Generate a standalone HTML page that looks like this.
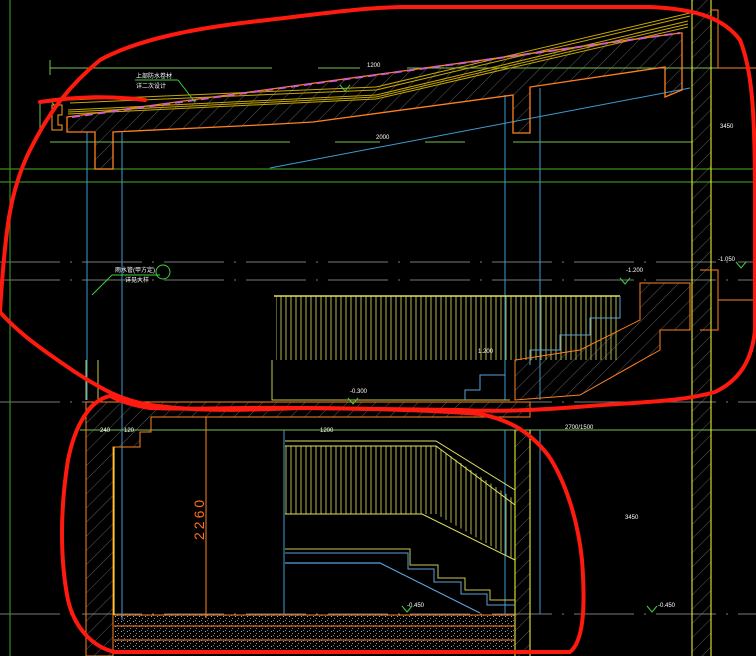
<!DOCTYPE html>
<html><head><meta charset="utf-8"><style>
html,body{margin:0;padding:0;background:#000;}
svg{display:block}
text{font-family:"Liberation Sans","Noto Sans CJK SC",sans-serif;fill:#fff;font-size:6px}
</style></head><body>
<svg width="756" height="656" viewBox="0 0 756 656" xmlns="http://www.w3.org/2000/svg">
<defs>
<pattern id="h" width="10" height="10" patternUnits="userSpaceOnUse" patternTransform="rotate(45)">
<line x1="0" y1="0" x2="0" y2="10" stroke="#999" stroke-width="0.6"/></pattern>
<pattern id="rail" width="5" height="10" patternUnits="userSpaceOnUse">
<line x1="1" y1="0" x2="1" y2="10" stroke="#e0e060" stroke-width="0.8"/></pattern>
<pattern id="spk" width="6" height="5" patternUnits="userSpaceOnUse">
<rect x="1" y="1" width="1" height="1" fill="#aaa"/><rect x="4" y="3" width="1" height="1" fill="#888"/><rect x="3" y="0" width="1" height="1" fill="#777"/></pattern>
</defs>
<rect width="756" height="656" fill="#000"/>
<g stroke="#3a8a20" stroke-width="1.2" fill="none">
<line x1="10" y1="0" x2="10" y2="656"/>
<line x1="0" y1="169" x2="756" y2="169"/>
<line x1="0" y1="182" x2="756" y2="182"/>
</g>
<g stroke="#7ac050" stroke-width="1" fill="none">
<line x1="50" y1="68" x2="272" y2="68"/><line x1="318" y1="68" x2="360" y2="68"/><line x1="407" y1="68" x2="756" y2="68"/>
<line x1="50" y1="142" x2="290" y2="142"/><line x1="335" y1="142" x2="380" y2="142"/><line x1="425" y1="142" x2="465" y2="142"/><line x1="513" y1="142" x2="692" y2="142"/>
<line x1="80" y1="430" x2="756" y2="430"/>
<line x1="50" y1="60" x2="50" y2="75"/><line x1="40" y1="100" x2="40" y2="135"/>
</g>
<g stroke="#777" stroke-width="1" stroke-dasharray="60 10 2 10" fill="none">
<line x1="0" y1="262" x2="756" y2="262"/><line x1="0" y1="280" x2="756" y2="280"/>
<line x1="0" y1="402" x2="756" y2="402"/><line x1="0" y1="614" x2="756" y2="614"/>
</g>
<g stroke="#3f9ad0" stroke-width="1" fill="none">
<line x1="87" y1="132" x2="87" y2="400"/><line x1="122" y1="132" x2="122" y2="620"/>
<line x1="505" y1="95" x2="505" y2="400"/><line x1="540" y1="88" x2="540" y2="400"/>
<line x1="284" y1="430" x2="284" y2="614"/><line x1="505" y1="430" x2="505" y2="614"/><line x1="540" y1="430" x2="540" y2="614"/>
<line x1="270" y1="168" x2="690" y2="88"/>
</g>
<path d="M67,117 L680,33 L682,33 L682,90 L665,97 L665,67 L530,87 L530,133 L513,133 L513,95 L313,122 L260,125 L113,132 L113,169 L95,169 L95,132 L67,132 Z" fill="url(#h)" stroke="#ff8020" stroke-width="1.3"/>
<path d="M52,105 L62,105 L62,115 L58,115 L58,125 L62,125 L62,130 L52,130 Z" fill="none" stroke="#ffa020" stroke-width="1"/>
<g stroke="#c8a800" stroke-width="1" fill="none">
<line x1="70" y1="100" x2="376" y2="87"/><line x1="376" y1="87" x2="690" y2="13"/>
<line x1="70" y1="103" x2="376" y2="90"/><line x1="376" y1="90" x2="690" y2="16"/>
<line x1="68" y1="112" x2="376" y2="97"/><line x1="376" y1="97" x2="688" y2="24"/>
<line x1="68" y1="114" x2="376" y2="99"/><line x1="376" y1="99" x2="688" y2="27"/>
<line x1="68" y1="110" x2="376" y2="95"/><line x1="376" y1="95" x2="688" y2="21"/>
</g>
<line x1="72" y1="117" x2="680" y2="33" stroke="#d060c0" stroke-width="2" stroke-dasharray="8 5"/>
<rect x="692" y="0" width="19" height="656" fill="url(#h)"/>
<g stroke="#ffff30" stroke-width="1"><line x1="692" y1="0" x2="692" y2="656"/><line x1="711" y1="0" x2="711" y2="656"/></g>
<path d="M711,10 L718,10 L718,68 L756,68 M700,270 L718,270 L718,300 L756,300 M718,300 L718,330 L700,330" fill="none" stroke="#ff8020" stroke-width="1"/>
<rect x="276" y="296" width="344" height="64" fill="url(#rail)"/>
<line x1="274" y1="296" x2="620" y2="296" stroke="#e0e060" stroke-width="1.5"/>
<path d="M620,296 L620,318 L590,318 L590,335 L560,335 L560,350 L530,350 L530,365" fill="none" stroke="#5aa0d8" stroke-width="1"/>
<path d="M640,283 L690,283 L690,330 L660,330 L660,350 L580,395 L515,400 L515,360 L580,350 L640,320 Z" fill="url(#h)" stroke="#ff8020" stroke-width="1"/>
<path d="M272,360 L272,400 L510,400" fill="none" stroke="#c8c850" stroke-width="1"/>
<path d="M465,400 L465,390 L480,390 L480,375 L505,375" fill="none" stroke="#5aa0d8" stroke-width="1"/>
<path d="M96,402 L530,402 L530,417 L151,417 L151,432 L140,432 L140,447 L113,447 L113,656 L86,656 L86,402 Z" fill="url(#h)" stroke="#ff8020" stroke-width="1"/>
<path d="M98,360 L98,400 M86,360 L86,400" stroke="#c8c850" stroke-width="1"/>
<line x1="114" y1="447" x2="114" y2="615" stroke="#ffff30" stroke-width="1"/>
<rect x="515" y="430" width="15" height="226" fill="url(#h)"/>
<g stroke="#ffff30" stroke-width="1"><line x1="515" y1="430" x2="515" y2="656"/><line x1="530" y1="430" x2="530" y2="656"/></g>
<rect x="285" y="446" width="151" height="68" fill="url(#rail)"/>
<path d="M436,446 L515,500 L515,560 L436,514 Z" fill="url(#rail)"/>
<path d="M285,441 L436,441 L515,490 M285,446 L436,446 L515,505 M285,514 L422,514 L515,560" fill="none" stroke="#e0e060" stroke-width="1"/>
<path d="M285,549 L410,549 L410,565 L438,565 L438,578 L465,578 L465,590 L490,590 L490,600 L515,600" fill="none" stroke="#c8c850" stroke-width="1"/>
<path d="M285,553 L408,553 L408,569 L434,569 L434,582 L461,582 L461,594 L487,594 L487,605 L515,605" fill="none" stroke="#5aa0d8" stroke-width="1"/>
<path d="M285,563 L380,563 L480,613" fill="none" stroke="#5aa0d8" stroke-width="1.2"/>
<rect x="114" y="615" width="401" height="36" fill="url(#spk)"/>
<g stroke="#ff8020" stroke-width="1"><line x1="114" y1="615" x2="515" y2="615"/><line x1="114" y1="626" x2="515" y2="626"/><line x1="114" y1="640" x2="515" y2="640"/><line x1="206" y1="417" x2="206" y2="618"/></g>
<text x="0" y="0" transform="translate(204,540) rotate(-90)" style="fill:#ff7020;font-size:14px;letter-spacing:3px">2260</text>
<text x="136" y="78">上部防水卷材</text><text x="136" y="88">详二次设计</text>
<text x="367" y="67">1200</text><text x="376" y="139">2000</text>
<text x="115" y="272">雨水管(甲方定)</text><text x="125" y="282">详见大样</text>
<text x="720" y="128">3450</text><text x="350" y="393">-0.300</text><text x="320" y="432">1200</text>
<text x="565" y="429">2700/1500</text><text x="625" y="519">3450</text><text x="407" y="607">-0.450</text><text x="658" y="607">-0.450</text>
<text x="478" y="353">1.200</text><text x="626" y="272">-1.200</text><text x="718" y="261">-1.050</text>
<text x="100" y="432">240</text><text x="124" y="432">120</text>
<g stroke="#40d040" stroke-width="1" fill="none">
<path d="M50,100 l5,6 l5,-6 M340,85 l5,6 l5,-6 M620,278 l5,6 l5,-6 M736,262 l5,6 l5,-6 M348,398 l5,6 l5,-6 M402,606 l5,6 l5,-6 M647,606 l5,6 l5,-6"/>
<line x1="135" y1="80" x2="178" y2="80"/><line x1="178" y1="80" x2="195" y2="102"/>
<line x1="112" y1="275" x2="160" y2="275"/><line x1="112" y1="275" x2="92" y2="295"/>
<circle cx="163" cy="272" r="7"/>
</g>
<g stroke="#ff1a10" stroke-width="4" fill="none" stroke-linecap="round" stroke-linejoin="round">
<path d="M0,312 C5,230 10,190 30,150 C50,110 70,85 100,60 C140,38 200,28 250,22 C320,14 360,8 400,7 L650,7 C700,9 725,20 740,40 C752,70 755,110 755,200 L755,330 C752,360 740,380 715,392 C680,402 640,402 590,406 C540,410 500,412 460,410 L300,408 C250,410 200,412 150,405 C120,400 100,388 75,372 C50,355 20,335 0,312"/>
<path d="M40,102 C80,96 110,96 145,100"/>
<path d="M110,396 C90,400 75,425 68,460 C60,510 60,560 68,600 C75,630 95,648 115,652 L570,652 C585,640 585,600 582,560 C578,520 565,480 548,455 C530,432 510,420 480,414 C430,410 350,408 300,408 C240,407 200,410 150,408 C130,405 118,400 110,396"/>
</g>
</svg>
</body></html>
